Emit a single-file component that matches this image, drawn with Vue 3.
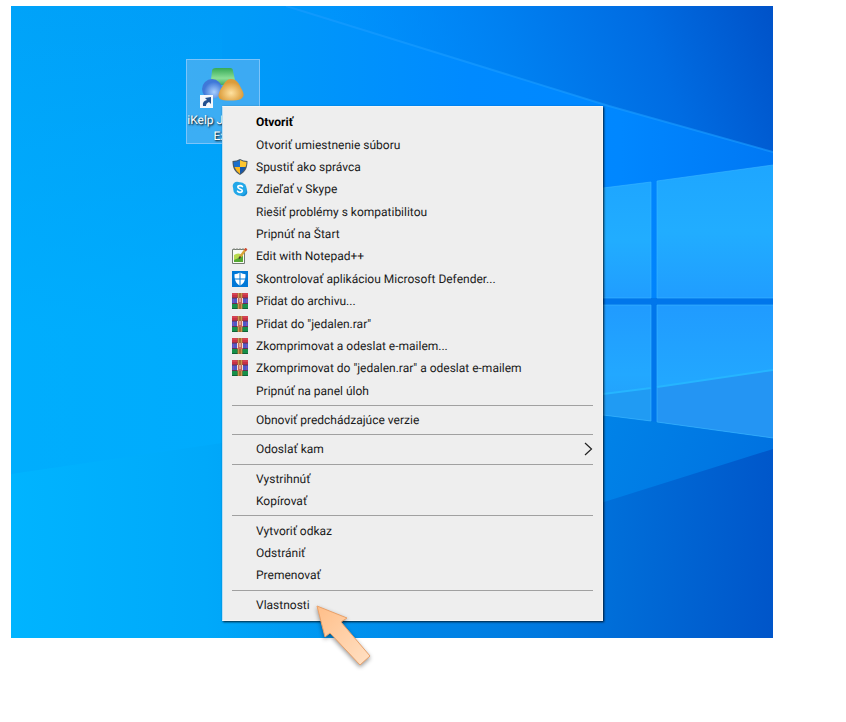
<script setup>
// Each group is followed by a separator, except the last one
const groups = [
  [
    { label: 'Otvoriť', bold: true },
    { label: 'Otvoriť umiestnenie súboru' },
    { label: 'Spustiť ako správca', icon: 'shield' },
    { label: 'Zdieľať v Skype', icon: 'skype' },
    { label: 'Riešiť problémy s kompatibilitou' },
    { label: 'Pripnúť na Štart' },
    { label: 'Edit with Notepad++', icon: 'notepad' },
    { label: 'Skontrolovať aplikáciou Microsoft Defender...', icon: 'defender' },
    { label: 'Přidat do archivu...', icon: 'rar' },
    { label: 'Přidat do "jedalen.rar"', icon: 'rar' },
    { label: 'Zkomprimovat a odeslat e-mailem...', icon: 'rar' },
    { label: 'Zkomprimovat do "jedalen.rar" a odeslat e-mailem', icon: 'rar' },
    { label: 'Pripnúť na panel úloh' }
  ],
  [{ label: 'Obnoviť predchádzajúce verzie' }],
  [{ label: 'Odoslať kam', submenu: true }],
  [{ label: 'Vystrihnúť' }, { label: 'Kopírovať' }],
  [{ label: 'Vytvoriť odkaz' }, { label: 'Odstrániť' }, { label: 'Premenovať' }],
  [{ label: 'Vlastnosti' }]
];
</script>

<template>
  <main class="page">
    <section class="desktop">
      <svg class="wallpaper" viewBox="11 6 762 632" preserveAspectRatio="none" aria-hidden="true">
        <defs>
          <linearGradient id="base" x1="0" y1="0" x2="1" y2="0">
            <stop offset="0" stop-color="#00a3f9" />
            <stop offset="0.3" stop-color="#009bf8" />
            <stop offset="0.6" stop-color="#008aff" />
            <stop offset="0.8" stop-color="#0087ff" />
            <stop offset="1" stop-color="#0078f4" />
          </linearGradient>
          <linearGradient id="top" gradientUnits="userSpaceOnUse" x1="380" y1="150" x2="773" y2="6">
            <stop offset="0" stop-color="#008df4" stop-opacity="0" />
            <stop offset="0.4" stop-color="#007ff0" />
            <stop offset="0.7" stop-color="#006ce2" />
            <stop offset="1" stop-color="#0052c8" />
          </linearGradient>
          <linearGradient id="glow" x1="0" y1="0" x2="0" y2="1">
            <stop offset="0" stop-color="#00b2ff" stop-opacity="0" />
            <stop offset="0.7" stop-color="#00b2ff" stop-opacity="0.7" />
            <stop offset="1" stop-color="#00b2ff" stop-opacity="0.7" />
          </linearGradient>
          <linearGradient id="left" gradientUnits="userSpaceOnUse" x1="11" y1="0" x2="400" y2="0">
            <stop offset="0" stop-color="#00b4ff" />
            <stop offset="0.5" stop-color="#00a9fa" />
            <stop offset="1" stop-color="#0090ef" />
          </linearGradient>
          <linearGradient id="bottom" gradientUnits="userSpaceOnUse" x1="200" y1="600" x2="773" y2="638">
            <stop offset="0" stop-color="#009df3" stop-opacity="0" />
            <stop offset="0.6" stop-color="#0078df" />
            <stop offset="1" stop-color="#0055c9" />
          </linearGradient>
          <linearGradient id="low" gradientUnits="userSpaceOnUse" x1="600" y1="420" x2="773" y2="480">
            <stop offset="0" stop-color="#0083e8" />
            <stop offset="1" stop-color="#0071e0" />
          </linearGradient>
          <linearGradient id="pane" x1="0" y1="0" x2="0" y2="1">
            <stop offset="0" stop-color="#1ea6ff" />
            <stop offset="0.5" stop-color="#21adff" />
            <stop offset="1" stop-color="#209dff" />
          </linearGradient>
          <linearGradient id="paneLow" x1="0" y1="0" x2="0" y2="1">
            <stop offset="0" stop-color="#209bff" />
            <stop offset="0.6" stop-color="#22a8ff" />
            <stop offset="1" stop-color="#239cfa" />
          </linearGradient>
        </defs>
        <rect x="11" y="6" width="762" height="632" fill="url(#base)" />
        <path d="M11 6H222V474H11Z" fill="url(#glow)" />
        <path d="M286 6H773V152L609 106Z" fill="url(#top)" />
        <path d="M286 6L609 106L773 152" fill="none" stroke="#1a9cff" stroke-width="2" opacity="0.6" />
        <path d="M11 474L222 443L420 415V638H11Z" fill="url(#left)" />
        <path d="M420 410L604 394L773 371V638H420Z" fill="url(#low)" />
        <path d="M200 638L604 502L773 449V638Z" fill="url(#bottom)" />
        <path d="M603 188L651 182V298H603Z" fill="url(#pane)" />
        <path d="M657 181L773 165V298H657Z" fill="url(#pane)" />
        <path d="M603 305H651V421L603 415Z" fill="url(#paneLow)" />
        <path d="M657 305H773V438L657 422Z" fill="url(#paneLow)" />
        <path d="M603 394L651 388V421L603 415Z" fill="#209bf3" />
        <path d="M657 387L773 370V438L657 422Z" fill="#2495f3" />
        <path d="M651 298H773V305H657V422L651 421V305H603V298Z" fill="#0076eb" />
        <g fill="none" stroke="#3cb8ff" opacity="0.6">
          <path d="M603 188L651 182V298H603M657 298V181L773 165M657 298H773" />
          <path d="M603 305H651V421L603 415M773 305H657V422L773 438" />
        </g>
        <path d="M603 394L651 388M657 387L773 370" stroke="#26b5ff" stroke-width="2" />
      </svg>

      <button class="shortcut" type="button">
        <svg class="shortcut-icon" viewBox="0 0 46 44" aria-hidden="true">
          <defs>
            <linearGradient id="green" x1="0" y1="0" x2="0" y2="1">
              <stop offset="0" stop-color="#35a955" />
              <stop offset="0.6" stop-color="#8bdf98" />
              <stop offset="1" stop-color="#46ac62" />
            </linearGradient>
            <radialGradient id="blue" cx="0.6" cy="0.65">
              <stop offset="0" stop-color="#a9d0ff" />
              <stop offset="1" stop-color="#3f78d8" />
            </radialGradient>
            <radialGradient id="gold" cx="0.5" cy="0.65">
              <stop offset="0" stop-color="#ffe2a0" />
              <stop offset="1" stop-color="#dc9c3a" />
            </radialGradient>
          </defs>
          <path d="M12 4Q12 1 16 1H30Q33 1 33 4L35 13Q35 18 30 18H16Q10 18 11 13Z" fill="url(#green)" />
          <circle cx="12" cy="22" r="10" fill="url(#blue)" />
          <path d="M31 12C36 12 39 16 41 21C44 26 45 29 41 32C37 34 23 34 20 32C17 29 19 25 22 20C25 15 27 12 31 12Z" fill="url(#gold)" />
          <rect x="0" y="28" width="13" height="13" fill="#f5f8fc" />
          <path d="M3 39Q2 34 7 33L5 31L11 30V37L9 35Q6 36 6 39Z" fill="#22508f" />
        </svg>
        <span>iKelp Jedáleň<br />Exe</span>
      </button>

      <nav class="menu">
        <template v-for="(group, i) in groups" :key="i">
          <hr v-if="i > 0" />
          <button
            v-for="item in group"
            :key="item.label"
            type="button"
            :class="['menu-item', { bold: item.bold }]"
          >
            <span class="menu-icon">
              <svg v-if="item.icon === 'shield'" viewBox="0 0 16 16">
                <path d="M8 0Q11 2 15.5 2C15.5 9 13.5 13 8 16C2.5 13 .5 9 .5 2Q5 2 8 0Z" fill="#4b5862" />
                <path d="M8 1Q5 3 1.5 3Q1.5 6 2.5 8H8Z" fill="#1b6fcb" />
                <path d="M8 1Q11 3 14.5 3Q14.5 6 13.5 8H8Z" fill="#ffc62e" />
                <path d="M2.5 8H8V15Q4 12 2.5 8Z" fill="#fdb91d" />
                <path d="M13.5 8H8V15Q12 12 13.5 8Z" fill="#1559ad" />
              </svg>
              <svg v-else-if="item.icon === 'skype'" viewBox="0 0 16 16">
                <circle cx="5" cy="5" r="4.3" fill="#22a7e8" />
                <circle cx="11" cy="11" r="4.3" fill="#168fd6" />
                <circle cx="8" cy="8" r="6.8" fill="#22a7e8" />
                <path d="M10.4 5.6Q9.6 4.6 8 4.6Q5.8 4.6 5.8 6.1C5.8 8.3 10.3 7.5 10.3 9.8Q10.3 11.4 8 11.4Q6.2 11.4 5.5 10.2" fill="none" stroke="#fff" stroke-width="1.6" stroke-linecap="round" />
              </svg>
              <svg v-else-if="item.icon === 'notepad'" viewBox="0 0 16 16">
                <path d="M.5 1.5H12.5V15.5H.5Z" fill="#f9fbf6" stroke="#727a70" />
                <path d="M2 7Q6 4 11 7V14H2Z" fill="#b7da4e" />
                <path d="M2 12L11 8V14H2Z" fill="#55a832" />
                <path d="M2 2V0M5 2V0M8 2V0M11 2V0" stroke="#899088" />
                <path d="M8 9L14 1" stroke="#d9a338" stroke-width="2.4" />
                <path d="M13 2.5L14.5 .5" stroke="#cf4934" stroke-width="2.4" />
                <path d="M7 10.5L8.5 8.5" stroke="#453e30" stroke-width="1.5" />
              </svg>
              <svg v-else-if="item.icon === 'defender'" viewBox="0 0 16 16">
                <path d="M0 0H16V16H0Z" fill="#0078d7" />
                <path d="M8 1.5Q10.5 3 13.5 3.2C13.7 9 12 12.5 8 14.7C4 12.5 2.3 9 2.5 3.2Q5.5 3 8 1.5Z" fill="#fff" />
                <path d="M8 1V15M2 8H14" stroke="#0078d7" />
              </svg>
              <svg v-else-if="item.icon === 'rar'" viewBox="0 0 16 16">
                <path d="M0 0H16V5H0Z" fill="#c93045" />
                <path d="M0 5H16V11H0Z" fill="#4d58c9" />
                <path d="M0 11H16V16H0Z" fill="#16904a" />
                <path d="M0 5H16M0 10.5H16" stroke="#63304f" />
                <path d="M0 1H16" stroke="#df5962" />
                <path d="M0 15.5H16" stroke="#0d6437" />
                <path d="M5.5 0H10.5V16H5.5Z" fill="#a86b35" />
                <path d="M6.5 0V16M9.5 0V16" stroke="#cc954e" />
                <path d="M1.5 6V10M14.5 6V10" stroke="#8451b3" />
                <path d="M5 5H11V11H5Z" fill="#c9675c" />
                <path d="M5.5 5V10M10.5 5V10M8 5V9" stroke="#f3ddd2" />
              </svg>
            </span>
            <span class="menu-label">{{ item.label }}</span>
            <svg v-if="item.submenu" class="chevron" viewBox="0 0 9 14" aria-hidden="true">
              <path d="M1 1L7.5 7L1 13" fill="none" stroke="#222" stroke-width="1.2" />
            </svg>
          </button>
        </template>
      </nav>

      <svg class="pointer" viewBox="0 0 62 68" aria-hidden="true">
        <defs>
          <linearGradient id="peach" x1="0" y1="0" x2="1" y2="1">
            <stop offset="0" stop-color="#ffbe88" />
            <stop offset="1" stop-color="#ffe1c5" />
          </linearGradient>
        </defs>
        <path d="M4 4L34 16L28 20L57 54L47 63L17 31L12 35Z" fill="url(#peach)" stroke="#e9a068" stroke-linejoin="round" />
      </svg>
    </section>
  </main>
</template>

<style>
body {
  margin: 0;
  background: #fff;
}
</style>

<style scoped>
.page {
  padding: 6px 73px 84px 11px;
  font-family: Roboto, 'Open Sans', sans-serif;
  text-rendering: geometricPrecision;
}

.desktop {
  position: relative;
  min-height: 632px;
}

.wallpaper {
  position: absolute;
  inset: 0;
  width: 100%;
  height: 100%;
}

.shortcut {
  position: absolute;
  left: 175px;
  top: 53px;
  box-sizing: border-box;
  width: 74px;
  height: 85px;
  display: flex;
  flex-direction: column;
  align-items: center;
  gap: 1px;
  padding: 7px 0 0;
  border: 1px solid #7cc4fa;
  background: rgba(120, 185, 238, 0.5);
  color: #fff;
  font-family: inherit;
  font-size: 12px;
  line-height: 16px;
  text-shadow: 1px 1px 2px #000;
  text-rendering: inherit;
  white-space: nowrap;
}

.shortcut-icon {
  width: 46px;
  height: 44px;
  flex: none;
}

.menu {
  position: absolute;
  left: 211px;
  top: 100px;
  box-sizing: border-box;
  width: 381px;
  min-height: 515px;
  display: flex;
  flex-direction: column;
  padding: 4px 9px;
  background: #eee;
  border: 1px solid #f5f5f5;
  border-left-color: #b9ddf3;
  box-shadow: 1px 1px 2px rgba(0, 0, 0, 0.8);
}

.menu hr {
  width: 100%;
  height: 1px;
  margin: 3px 0;
  border: 0;
  background: #a0a0a0;
}

.menu-item {
  flex: 1;
  display: flex;
  align-items: center;
  gap: 8px;
  padding: 0;
  border: 0;
  background: none;
  color: #1a1a1a;
  font-family: inherit;
  font-size: 12px;
  line-height: 20px;
  text-align: left;
  text-rendering: inherit;
}

.menu-item:hover {
  background: #fff;
}

.bold {
  color: #000;
  font-weight: 700;
}

.menu-icon {
  width: 16px;
  height: 16px;
  flex: none;
}

.menu-icon svg {
  display: block;
}

.menu-label {
  flex: 1;
  white-space: nowrap;
}

.chevron {
  width: 9px;
  height: 14px;
}

.pointer {
  position: absolute;
  left: 302px;
  top: 596px;
  width: 62px;
  height: 68px;
  filter: drop-shadow(0 2px 2px rgba(0, 0, 0, 0.4));
}
</style>
